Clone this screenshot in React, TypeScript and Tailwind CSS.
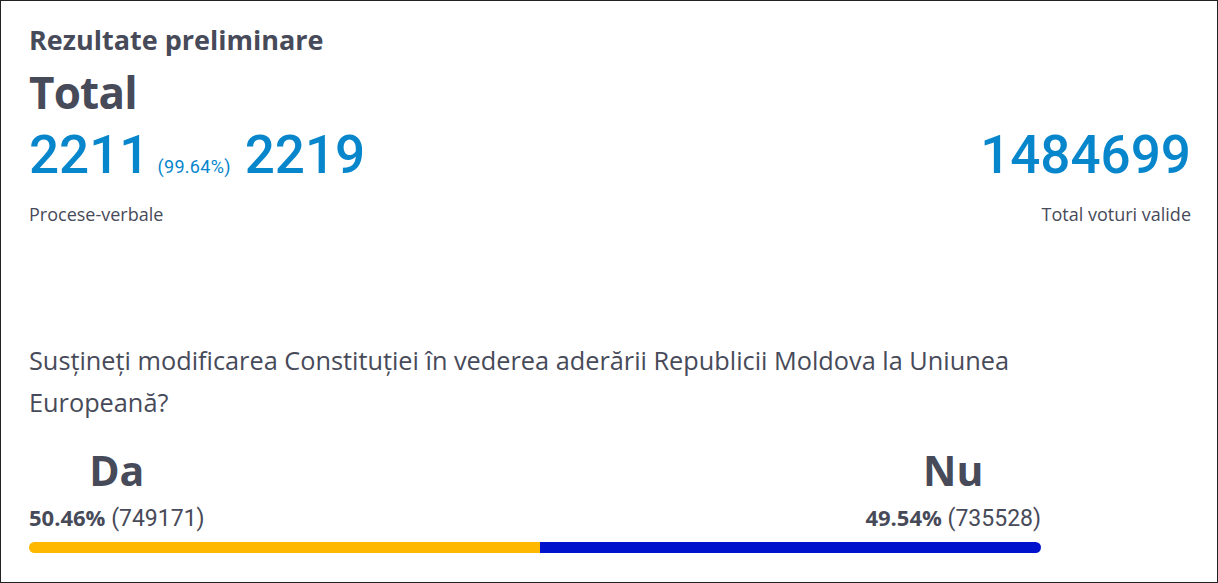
import React from "react";

export default function App() {
  const da = 50.46;
  return (
    <div className="w-full h-[583px] border border-[#222222] bg-white pl-7 pr-[26px] pt-[22px] font-['Open_Sans','Noto_Sans',sans-serif] text-[#474a59] overflow-hidden">
      <h2 className="text-[27px] leading-[34px] font-bold">Rezultate preliminare</h2>
      <h1 className="text-[44px] leading-[52px] font-bold mt-[9px] tracking-[-0.8px]">Total</h1>
      <div className="flex justify-between mt-[6px]">
        <div>
          <div className="flex items-baseline text-[#0786cc] font-['Roboto',sans-serif]">
            <span className="text-[53px] leading-[62px] font-medium">2211</span>
            <span className="text-[18px] ml-[8px] mr-[14px] tracking-[0.3px]">(99.64%)</span>
            <span className="text-[53px] leading-[62px] font-medium">2219</span>
          </div>
          <div className="text-[18px] leading-[26px] mt-[15px]">Procese-verbale</div>
        </div>
        <div className="text-right">
          <div className="text-[53px] leading-[62px] font-medium text-[#0786cc] font-['Roboto',sans-serif]">1484699</div>
          <div className="text-[18px] leading-[26px] mt-[15px]">Total voturi valide</div>
        </div>
      </div>
      <p className="text-[25.3px] leading-[42px] mt-[112px] max-w-[1015px]">
        Susțineți modificarea Constituției în vederea aderării Republicii Moldova la Uniunea Europeană?
      </p>
      <div className="w-[1012px] mt-[22px]">
        <div className="flex justify-between">
          <div className="flex flex-col items-center">
            <div className="text-[41px] leading-[50px] font-bold">Da</div>
            <div className="text-[22px] leading-[28px] mt-[8px] whitespace-nowrap">
              <span className="font-bold">50.46%</span>{" "}
              <span className="font-['Roboto',sans-serif] text-[23px]">(749171)</span>
            </div>
          </div>
          <div className="flex flex-col items-center">
            <div className="text-[41px] leading-[50px] font-bold">Nu</div>
            <div className="text-[22px] leading-[28px] mt-[8px] whitespace-nowrap">
              <span className="font-bold">49.54%</span>{" "}
              <span className="font-['Roboto',sans-serif] text-[23px]">(735528)</span>
            </div>
          </div>
        </div>
        <div className="flex h-[11px] mt-[9px] rounded-full overflow-hidden">
          <div className="bg-[#ffb800] h-full" style={{ width: `${da}%` }} />
          <div className="bg-[#0012cc] h-full flex-1" />
        </div>
      </div>
    </div>
  );
}
